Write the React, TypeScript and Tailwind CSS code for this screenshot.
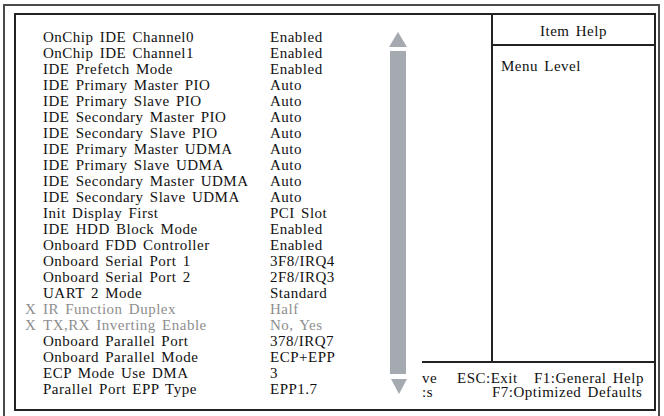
const rows: { label: string; value: string; off?: boolean }[] = [
  { label: "OnChip IDE Channel0", value: "Enabled" },
  { label: "OnChip IDE Channel1", value: "Enabled" },
  { label: "IDE Prefetch Mode", value: "Enabled" },
  { label: "IDE Primary Master PIO", value: "Auto" },
  { label: "IDE Primary Slave PIO", value: "Auto" },
  { label: "IDE Secondary Master PIO", value: "Auto" },
  { label: "IDE Secondary Slave PIO", value: "Auto" },
  { label: "IDE Primary Master UDMA", value: "Auto" },
  { label: "IDE Primary Slave UDMA", value: "Auto" },
  { label: "IDE Secondary Master UDMA", value: "Auto" },
  { label: "IDE Secondary Slave UDMA", value: "Auto" },
  { label: "Init Display First", value: "PCI Slot" },
  { label: "IDE HDD Block Mode", value: "Enabled" },
  { label: "Onboard FDD Controller", value: "Enabled" },
  { label: "Onboard Serial Port 1", value: "3F8/IRQ4" },
  { label: "Onboard Serial Port 2", value: "2F8/IRQ3" },
  { label: "UART 2 Mode", value: "Standard" },
  { label: "IR Function Duplex", value: "Half", off: true },
  { label: "TX,RX Inverting Enable", value: "No, Yes", off: true },
  { label: "Onboard Parallel Port", value: "378/IRQ7" },
  { label: "Onboard Parallel Mode", value: "ECP+EPP" },
  { label: "ECP Mode Use DMA", value: "3" },
  { label: "Parallel Port EPP Type", value: "EPP1.7" },
];

const Arrow = ({ down }: { down?: boolean }) => (
  <svg width="18" height="15" viewBox="0 0 18 15" className="block">
    <polygon points={down ? "1,0 17,0 9,15" : "9,0 18,15 0,15"} fill="#a4aab0" />
  </svg>
);

export default function App() {
  return (
    <div
      className="w-[664px] h-[416px] bg-white overflow-hidden text-[15px] leading-[16px] tracking-[0.5px] [word-spacing:2px] text-[#111]"
      style={{ fontFamily: '"Liberation Serif", "Times New Roman", serif' }}
    >
      {/* outer frame */}
      <div className="ml-[3px] mt-[4px] w-[657px] h-[430px] border-2 border-b-0 border-[#4a4a4a] pt-[7px] pl-[9px]">
        {/* inner box */}
        <div className="w-[642px] h-[398px] border-2 border-[#222] flex">
          {/* settings list + scroll bar */}
          <div className="w-[406px] flex">
            <div className="w-[373px] pt-[14px]">
              {rows.map((r) => (
                <div key={r.label} className={`flex h-[16px] ${r.off ? "text-[#8e8e8e]" : ""}`}>
                  <span className="w-[27px] pl-[9px]">{r.off ? "X" : ""}</span>
                  <span className="w-[227px] whitespace-nowrap">{r.label}</span>
                  <span className="whitespace-nowrap">{r.value}</span>
                </div>
              ))}
            </div>
            <div className="w-[18px] pt-[17px] flex flex-col">
              <Arrow />
              <div className="mt-[4px] ml-[1px] w-[16px] h-[323px] bg-[#a4aab0]" />
              <div className="mt-[5px] ml-[1px]">
                <Arrow down />
              </div>
            </div>
          </div>

          {/* help + status */}
          <div className="flex-1 flex flex-col">
            <div className="h-[346px] pl-[69px] flex">
              <div className="flex-1 border-l-2 border-[#222]">
                <div className="h-[31px] pt-[8px] border-b-2 border-[#222] text-center">Item Help</div>
                <div className="pt-[12px] pl-[8px]">Menu Level</div>
              </div>
            </div>
            <div className="border-t-2 border-[#222] pt-[8px] leading-[14px] whitespace-nowrap">
              <div className="flex">
                <span className="w-[16px]">ve</span>
                <span className="w-[19px]" />
                <span className="w-[77px]">ESC:Exit</span>
                <span>F1:General Help</span>
              </div>
              <div className="flex">
                <span className="w-[11px]">:s</span>
                <span className="w-[59px]" />
                <span>F7:Optimized Defaults</span>
              </div>
            </div>
          </div>
        </div>
      </div>
    </div>
  );
}
